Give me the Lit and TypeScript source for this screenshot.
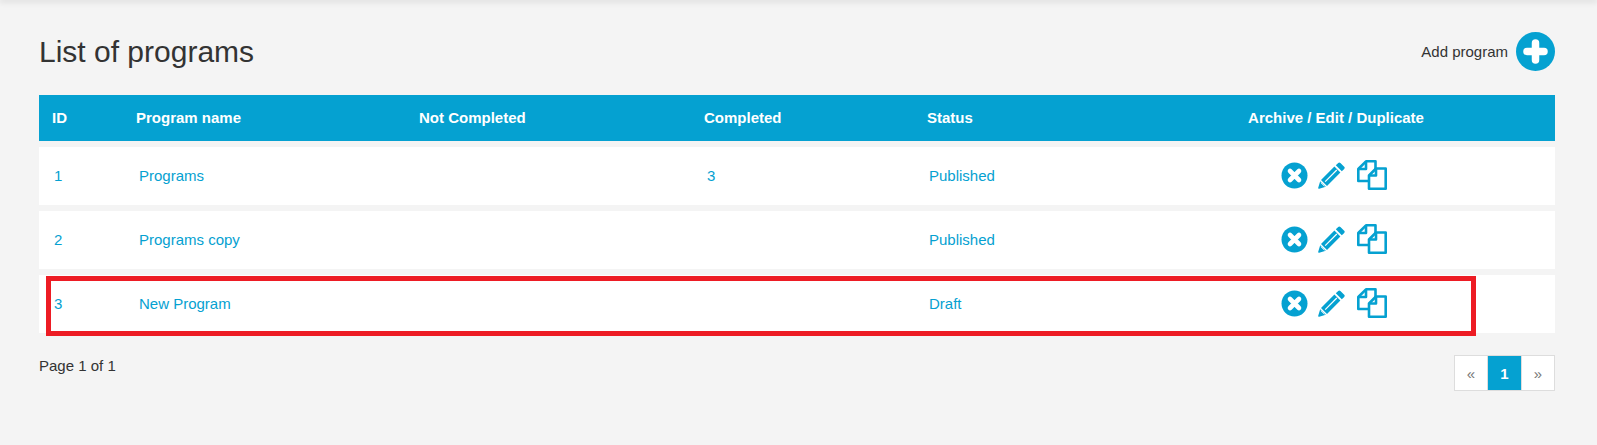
import { LitElement, html, css, svg } from "lit";
import { customElement } from "lit/decorators.js";

const rows = [
  { id: "1", name: "Programs", completed: "3", status: "Published" },
  { id: "2", name: "Programs copy", completed: "", status: "Published" },
  { id: "3", name: "New Program", completed: "", status: "Draft" },
];

const xIcon = svg`<svg class="i-x" width="27" height="27" viewBox="0 0 27 27"><circle cx="13.5" cy="13.5" r="13" fill="#05a1d1"/><path d="M9 9l9 9M18 9l-9 9" stroke="#fff" stroke-width="4.6" stroke-linecap="round"/></svg>`;
const pencil = svg`<svg class="i-p" width="27" height="27" viewBox="0 0 27 27"><path fill="#05a1d1" d="M20.2 .9a1.6 1.6 0 0 1 2.2 0l3.8 3.8a1.6 1.6 0 0 1 0 2.2l-2.4 2.400-6-6zM16.400 4.500l6 6-13.400 13.400-6-6z"/><path fill="#05a1d1" d="M2.200 19.200l5.600 5.600-6.600 2a.8.8 0 0 1-1-1z"/><path d="M7.200 19.600l11.600-11.600" stroke="#fff" stroke-width="1.200"/><path d="M2.800 20.500l3.700 3.700" stroke="#fff" stroke-width="1"/></svg>`;
const copy = svg`<svg class="i-c" width="30" height="30" viewBox="0 0 30 30"><g fill="#fff" stroke="#05a1d1" stroke-width="2.600" stroke-linejoin="round"><path d="M1.300 21V9L9 1.300h9.500V21z"/><path d="M9 1.300V9H1.300" fill="none"/><path d="M12 28.700V15.500l7-7h9.700v20.200z"/><path d="M19 8.500v7h-7" fill="none"/></g></svg>`;

@customElement("app-root")
export class AppRoot extends LitElement {
  static styles = css`
    :host {
      display: block;
      position: relative;
      height: 445px;
      overflow: hidden;
      background: #f4f4f4;
      color: #333;
      font-family: "Liberation Sans", Arial, sans-serif;
      font-size: 15px;
    }
    .shadow {
      height: 0;
      box-shadow: 0 0 6px 1px rgba(0, 0, 0, 0.22);
    }
    .page {
      padding: 32px 42px 0 39px;
    }
    .top {
      display: flex;
      justify-content: space-between;
      align-items: center;
      height: 39px;
      margin-bottom: 24px;
    }
    h1 {
      margin: 0;
      font-size: 30px;
      font-weight: 400;
      line-height: 39px;
    }
    .add {
      display: flex;
      align-items: center;
      gap: 8px;
    }
    .add svg {
      display: block;
    }
    .grid {
      display: grid;
      grid-template-columns: 85px 283px 285px 223px 202px 1fr;
      align-items: center;
    }
    .head {
      height: 46px;
      background: #05a1d1;
      color: #fff;
      font-weight: 700;
      margin-bottom: 6px;
    }
    .head > div {
      padding-left: 12px;
      padding-bottom: 2px;
    }
    .head > div:first-child {
      padding-left: 13px;
    }
    .row {
      height: 58px;
      background: #fff;
      margin-bottom: 6px;
      color: #05a1d1;
    }
    .row > div {
      padding-left: 15px;
      padding-bottom: 2px;
    }
    .row > div:nth-child(5) {
      padding-left: 14px;
    }
    .head > .actions,
    .row > .actions {
      padding: 0 0 2px;
      display: flex;
      justify-content: center;
      align-items: center;
    }
    .row > .actions {
      padding: 0 4px 0 0;
      margin-top: -2px;
    }
    .row > .actions svg {
      display: block;
    }
    .i-x { margin-right: 10px; }
    .i-p { margin-right: 12px; }
    .foot {
      display: flex;
      justify-content: space-between;
      align-items: flex-start;
      margin-top: 16px;
    }
    .foot > span {
      line-height: 20px;
      margin-top: 7px;
    }
    .pager {
      display: flex;
      margin-top: 6px;
    }
    .pager span {
      width: 34px;
      height: 36px;
      box-sizing: border-box;
      display: flex;
      align-items: center;
      justify-content: center;
      background: #fff;
      border: 1px solid #ddd;
      color: #777;
      margin-left: -1px;
    }
    .pager span.on {
      width: 35px;
      background: #05a1d1;
      color: #fff;
      font-weight: 700;
    }
    .redbox {
      position: absolute;
      left: 46px;
      top: 276px;
      width: 1430px;
      height: 60px;
      box-sizing: border-box;
      border: 5px solid #ed1c24;
    }
  `;

  render() {
    return html`
      <div class="shadow"></div>
      <div class="page">
        <div class="top">
          <h1>List of programs</h1>
          <div class="add">
            <span>Add program</span>
            <svg width="39" height="39" viewBox="0 0 39 39"><circle cx="19.500" cy="19.500" r="19.500" fill="#05a1d1"/><path d="M19.500 11v17M11 19.500h17" stroke="#fff" stroke-width="7.500" stroke-linecap="round"/></svg>
          </div>
        </div>
        <div class="grid head">
          <div>ID</div>
          <div>Program name</div>
          <div>Not Completed</div>
          <div>Completed</div>
          <div>Status</div>
          <div class="actions">Archive / Edit / Duplicate</div>
        </div>
        ${rows.map(
          (r) => html`<div class="grid row">
            <div>${r.id}</div>
            <div>${r.name}</div>
            <div></div>
            <div>${r.completed}</div>
            <div>${r.status}</div>
            <div class="actions">${xIcon}${pencil}${copy}</div>
          </div>`
        )}
        <div class="foot">
          <span>Page 1 of 1</span>
          <div class="pager"><span>«</span><span class="on">1</span><span>»</span></div>
        </div>
      </div>
      <div class="redbox"></div>
    `;
  }
}
